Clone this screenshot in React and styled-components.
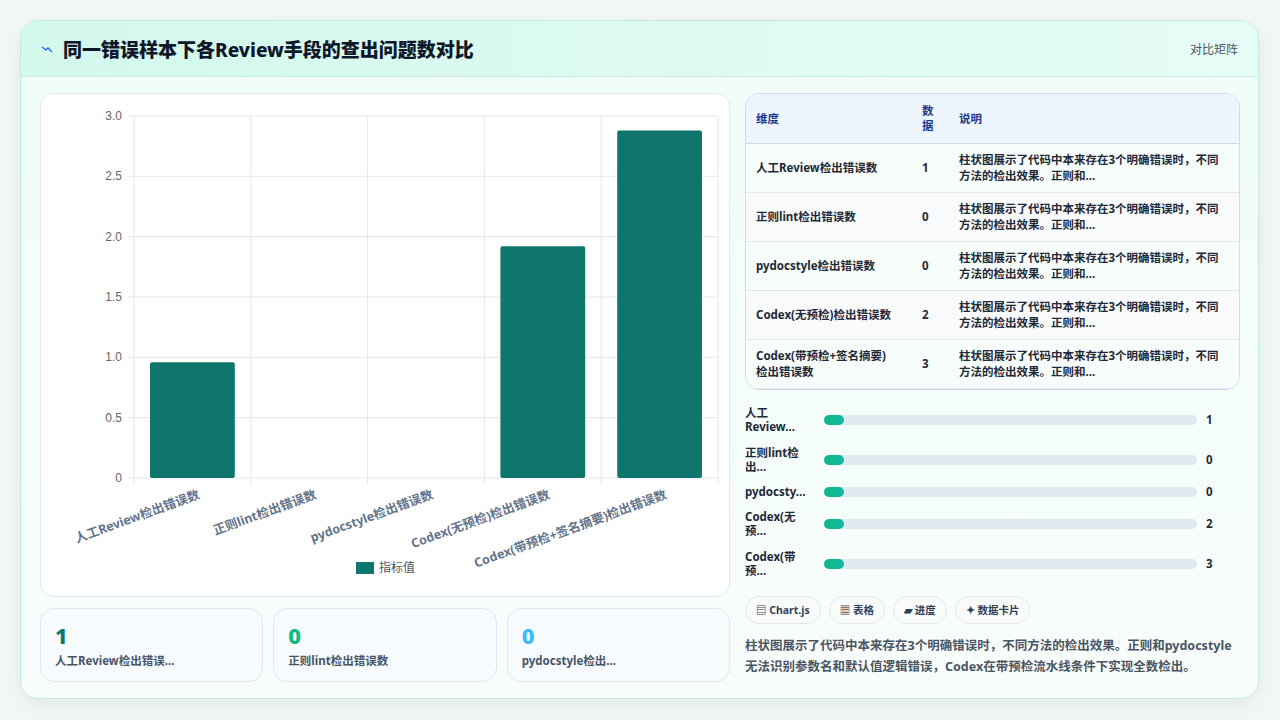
import React from "react";
import styled, { createGlobalStyle } from "styled-components";

const Global = createGlobalStyle`
  html,body{margin:0;padding:0;background:#f4f7f7;}
  body{font-family:"Noto Sans","Noto Sans CJK SC",sans-serif;width:1280px;height:720px;overflow:hidden;}
  *{box-sizing:border-box;}
`;

const Page = styled.div`padding:20px 21px 21px 20px;height:720px;`;
const Card = styled.div`
  height:679px;border:1px solid #bfeee0;border-radius:18px;overflow:hidden;
  background:linear-gradient(180deg,#f0fdf8,#f8fdfc);
  box-shadow:0 6px 24px rgba(15,60,50,0.08);display:flex;flex-direction:column;
`;
const Header = styled.div`
  height:56px;flex:none;display:flex;align-items:center;justify-content:space-between;
  padding:0 20px 0 20px;background:linear-gradient(90deg,#d3f8ec,#e6fdf5);
  border-bottom:1px solid #c9efe4;
`;
const Title = styled.h1`
  margin:0;font-size:19px;font-weight:800;color:#0f172a;display:flex;align-items:center;gap:10px;
`;
const HeaderRight = styled.span`font-size:12px;color:#4b5563;`;
const Body = styled.div`flex:1;display:flex;gap:15px;padding:16px 18px 16px 19px;`;
const Left = styled.div`width:690px;display:flex;flex-direction:column;gap:11px;`;
const ChartCard = styled.div`
  height:504px;background:#fff;border:1px solid #e2e8f0;border-radius:14px;overflow:hidden;
`;
const Stats = styled.div`display:flex;gap:10px;`;
const Stat = styled.div`
  flex:1;height:74px;background:#f8fbfd;border:1px solid #dbe8f3;border-radius:14px;padding:12px 14px;
`;
const StatNum = styled.div`font-size:22px;font-weight:800;color:${p=>p.c};line-height:28px;`;
const StatLabel = styled.div`font-size:11.5px;font-weight:700;color:#475569;margin-top:3px;`;
const Right = styled.div`width:496px;display:flex;flex-direction:column;`;
const TableWrap = styled.div`border:1px solid #cfdbe8;border-radius:14px;overflow:hidden;background:#fff;`;
const Table = styled.table`width:100%;border-collapse:collapse;font-size:11.5px;font-weight:700;`;
const Th = styled.th`
  text-align:left;color:#1e3a8a;background:#eef5ff;height:49px;padding:0 10px;font-weight:700;
  border-bottom:1px solid #cfdbe8;width:${p=>p.w||"auto"};line-height:15px;
`;
const Td = styled.td`
  height:49px;padding:0 10px;color:#1f2937;border-bottom:1px solid #e2e8f0;line-height:16px;
  background:${p=>p.alt?"#f8fafc":"#f7fdfa"};
`;
const Bars = styled.div`display:flex;flex-direction:column;margin-top:10px;gap:0;`;
const BarRow = styled.div`display:flex;align-items:center;height:${p=>p.h}px;`;
const BarLabel = styled.div`width:79px;font-size:11.5px;font-weight:700;color:#1f2937;line-height:14px;`;
const Track = styled.div`width:373px;height:10px;border-radius:5px;background:#e2e8f0;position:relative;`;
const Fill = styled.div`width:20px;height:10px;border-radius:5px;background:linear-gradient(90deg,#10b981,#14b8a6);`;
const BarVal = styled.div`margin-left:9px;font-size:11.5px;font-weight:700;color:#1f2937;`;
const Tags = styled.div`display:flex;gap:8px;margin-top:12px;`;
const Tag = styled.span`
  height:28px;padding:0 10px;border:1px solid #e2e8f0;border-radius:14px;background:#f8fafc;
  font-size:10.5px;font-weight:700;color:#334155;display:flex;align-items:center;gap:3px;
`;
const Desc = styled.p`margin:11px 0 0;font-size:12.5px;font-weight:700;color:#4b5563;line-height:21px;`;

const cats = ["人工Review检出错误数","正则lint检出错误数","pydocstyle检出错误数","Codex(无预检)检出错误数","Codex(带预检+签名摘要)检出错误数"];
const vals = [0.96,0,0,1.92,2.88];

function Chart(){
  const x0=93,x1=677,y0=22,y1=384,cw=(x1-x0)/5;
  const ys=[0,0.5,1,1.5,2,2.5,3];
  return (
    <svg width="690" height="504" style={{display:"block"}}>
      {ys.map(v=>{const y=y1-(v/3)*(y1-y0);return <g key={v}>
        <line x1={x0-6} x2={x1} y1={y} y2={y} stroke="#e5e7eb"/>
        <text x={x0-12} y={y+4} fontSize="12" fill="#666" textAnchor="end" fontFamily="Liberation Sans,sans-serif">{v===0?"0":v.toFixed(1)}</text>
      </g>})}
      {[0,1,2,3,4,5].map(i=><line key={i} x1={x0+i*cw} x2={x0+i*cw} y1={y0} y2={y1+6} stroke="#e5e7eb"/>)}
      {vals.map((v,i)=>v>0&&<rect key={i} x={x0+i*cw+16} width={cw-32} y={y1-(v/3)*(y1-y0)} height={(v/3)*(y1-y0)} fill="#0f766e" rx="2"/>)}
      {cats.map((c,i)=><text key={i} transform={`translate(${x0+i*cw+cw/2+8},${y1+20}) rotate(-20)`} textAnchor="end" fontSize="12.5" fontWeight="700" fill="#64748b">{c}</text>)}
      <rect x="315" y="468" width="18" height="12" fill="#0f766e"/>
      <text x="338" y="478" fontSize="12" fill="#555">指标值</text>
    </svg>
  );
}

const rowsH=[40,40,24,40,40];
const shortL=[["人工","Review..."],["正则lint检","出..."],["pydocsty..."],["Codex(无","预..."],["Codex(带","预..."]];
const num=["1","0","0","2","3"];
const descShort = <>柱状图展示了代码中本来存在3个明确错误时，不同<br/>方法的检出效果。正则和...</>;

export default function App(){
  return <Page><Global/>
    <Card>
      <Header>
        <Title><svg width="12" height="10" viewBox="0 0 12 10"><path d="M1 3 L5 6 L7 4 L11 8" stroke="#2563eb" strokeWidth="1.3" fill="none"/></svg>同一错误样本下各Review手段的查出问题数对比</Title>
        <HeaderRight>对比矩阵</HeaderRight>
      </Header>
      <Body>
        <Left>
          <ChartCard><Chart/></ChartCard>
          <Stats>
            <Stat><StatNum c="#0f766e">1</StatNum><StatLabel>人工Review检出错误...</StatLabel></Stat>
            <Stat><StatNum c="#10b981">0</StatNum><StatLabel>正则lint检出错误数</StatLabel></Stat>
            <Stat><StatNum c="#38bdf8">0</StatNum><StatLabel>pydocstyle检出...</StatLabel></Stat>
          </Stats>
        </Left>
        <Right>
          <TableWrap><Table><thead><tr><Th w="166px">维度</Th><Th w="37px">数<br/>据</Th><Th>说明</Th></tr></thead>
            <tbody>{["人工Review检出错误数","正则lint检出错误数","pydocstyle检出错误数","Codex(无预检)检出错误数",<>Codex(带预检+签名摘要)<br/>检出错误数</>].map((c,i)=>
              <tr key={i}><Td alt={i%2}>{c}</Td><Td alt={i%2}>{num[i]}</Td><Td alt={i%2}>{descShort}</Td></tr>)}</tbody>
          </Table></TableWrap>
          <Bars>{shortL.map((l,i)=><BarRow key={i} h={rowsH[i]}>
            <BarLabel>{l.map((s,j)=><div key={j}>{s}</div>)}</BarLabel>
            <Track><Fill/></Track><BarVal>{num[i]}</BarVal></BarRow>)}</Bars>
          <Tags><Tag>▤ Chart.js</Tag><Tag>▦ 表格</Tag><Tag>▰ 进度</Tag><Tag>✦ 数据卡片</Tag></Tags>
          <Desc>柱状图展示了代码中本来存在3个明确错误时，不同方法的检出效果。正则和pydocstyle无法识别参数名和默认值逻辑错误，Codex在带预检流水线条件下实现全数检出。</Desc>
        </Right>
      </Body>
    </Card>
  </Page>;
}
